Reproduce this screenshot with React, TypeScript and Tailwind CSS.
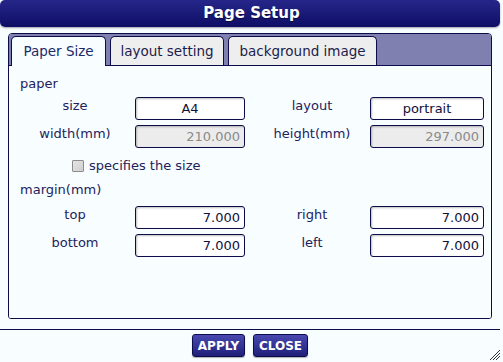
import React from "react";

const font = { fontFamily: '"DejaVu Sans", Verdana, sans-serif' };

function Field({ value, align = "right", disabled = false, w = "w-[110px]" }: { value: string; align?: "right" | "center"; disabled?: boolean; w?: string }) {
  return (
    <div
      className={`${w} h-[23px] shrink-0 rounded-[3px] border border-[#0c0c4a] shadow-[inset_1px_1px_2px_rgba(0,0,0,0.25)] flex items-center text-[13px] leading-[16px] ${
        align === "center" ? "justify-center" : "justify-end pr-[4px]"
      } ${disabled ? "bg-[#ececec] text-[#8a8a8a]" : "bg-white text-[#10103a]"}`}
    >
      {value}
    </div>
  );
}

function Row({ l1, v1, l2, v2, align = "right", disabled = false, className = "" }: { l1: string; v1: string; l2: string; v2: string; align?: "right" | "center"; disabled?: boolean; className?: string }) {
  return (
    <div className={`flex items-start h-[23px] pl-[11px] ${className}`}>
      <span className="w-[110px] text-center pt-[1px] leading-[16px]">{l1}</span>
      <div className="ml-[5px]">
        <Field value={v1} align={align} disabled={disabled} />
      </div>
      <span className="w-[125px] pl-[9px] text-center pt-[1px] leading-[16px]">{l2}</span>
      <Field value={v2} align={align} disabled={disabled} w="w-[114px]" />
    </div>
  );
}

export default function App() {
  return (
    <div className="w-[503px] h-[362px] bg-[#f8fdff] overflow-hidden relative" style={font}>
      <div className="w-[500px]">
        {/* Title bar */}
        <div className="h-[27px] rounded-[5px] bg-gradient-to-b from-[#26268a] to-[#0e0e66] shadow-[0_1px_2px_rgba(0,0,0,0.35)] flex items-center justify-center">
          <span className="text-white font-bold text-[15px] leading-none pl-[3px] [text-shadow:0_1px_1px_rgba(0,0,0,0.5)]">
            Page Setup
          </span>
        </div>

        {/* Tab frame */}
        <div className="mt-[6px] ml-[8px] w-[484px] border border-[#0c0c4a] rounded-t-[4px] rounded-b-[3px] overflow-hidden">
          <div className="bg-[#8080b0] pt-[2px] pl-[2px] flex gap-[4px] border-b border-[#0c0c4a] h-[32px]">
            <div className="w-[95px] h-[30px] bg-[#f8fdff] border border-b-0 border-[#0c0c4a] rounded-t-[5px] flex items-center justify-center text-[13.5px] text-[#1c2a6a] relative z-10">
              Paper Size
            </div>
            <div className="w-[114px] h-[29px] bg-[#eeeeee] border border-b-0 border-[#0c0c4a] rounded-t-[5px] flex items-center justify-center text-[13.5px] text-[#1c1c4a]">
              layout setting
            </div>
            <div className="w-[149px] h-[29px] bg-[#eeeeee] border border-b-0 border-[#0c0c4a] rounded-t-[5px] flex items-center justify-center text-[13.5px] text-[#1c1c4a]">
              background image
            </div>
          </div>
          <div className="h-[252px] bg-[#f8fdff] text-[13px] text-[#22225c]">
            <div className="pt-[10px] pl-[11px] leading-[16px]">paper</div>
            <Row className="mt-[5px]" l1="size" v1="A4" l2="layout" v2="portrait" align="center" />
            <Row className="mt-[5px]" l1="width(mm)" v1="210.000" l2="height(mm)" v2="297.000" disabled />
            <div className="mt-[10px] h-[16px] flex items-center pl-[63px]">
              <span className="w-[12px] h-[12px] border border-[#8c8c8c] bg-gradient-to-br from-[#e4e4e4] to-[#d0d0d0] rounded-[1px]" />
              <span className="ml-[5px] leading-[16px]">specifies the size</span>
            </div>
            <div className="mt-[8px] pl-[11px] leading-[16px]">margin(mm)</div>
            <Row className="mt-[8px]" l1="top" v1="7.000" l2="right" v2="7.000" />
            <Row className="mt-[5px]" l1="bottom" v1="7.000" l2="left" v2="7.000" />
          </div>
        </div>

        {/* Footer */}
        <div className="mt-[10px] h-[1px] bg-[#0c0c4a]" />
        <div className="mt-[4px] flex justify-center gap-[8px]">
          <button className="w-[53px] h-[23px] rounded-[3px] border border-[#0c0c4a] bg-gradient-to-b from-[#4848b0] to-[#20207a] text-white font-bold text-[12px] leading-none shadow-[0_1px_1px_rgba(0,0,0,0.3)]">
            APPLY
          </button>
          <button className="w-[55px] h-[23px] rounded-[3px] border border-[#0c0c4a] bg-gradient-to-b from-[#4848b0] to-[#20207a] text-white font-bold text-[12px] leading-none shadow-[0_1px_1px_rgba(0,0,0,0.3)]">
            CLOSE
          </button>
        </div>
      </div>
      {/* resize grip */}
      <svg className="absolute left-[489px] top-[349px]" width="12" height="12" viewBox="0 0 12 12">
        <line x1="1" y1="11" x2="11" y2="1" stroke="#333" strokeWidth="1" />
        <line x1="4" y1="11" x2="11" y2="4" stroke="#333" strokeWidth="1" />
        <line x1="7" y1="11" x2="11" y2="7" stroke="#333" strokeWidth="1" />
      </svg>
    </div>
  );
}
